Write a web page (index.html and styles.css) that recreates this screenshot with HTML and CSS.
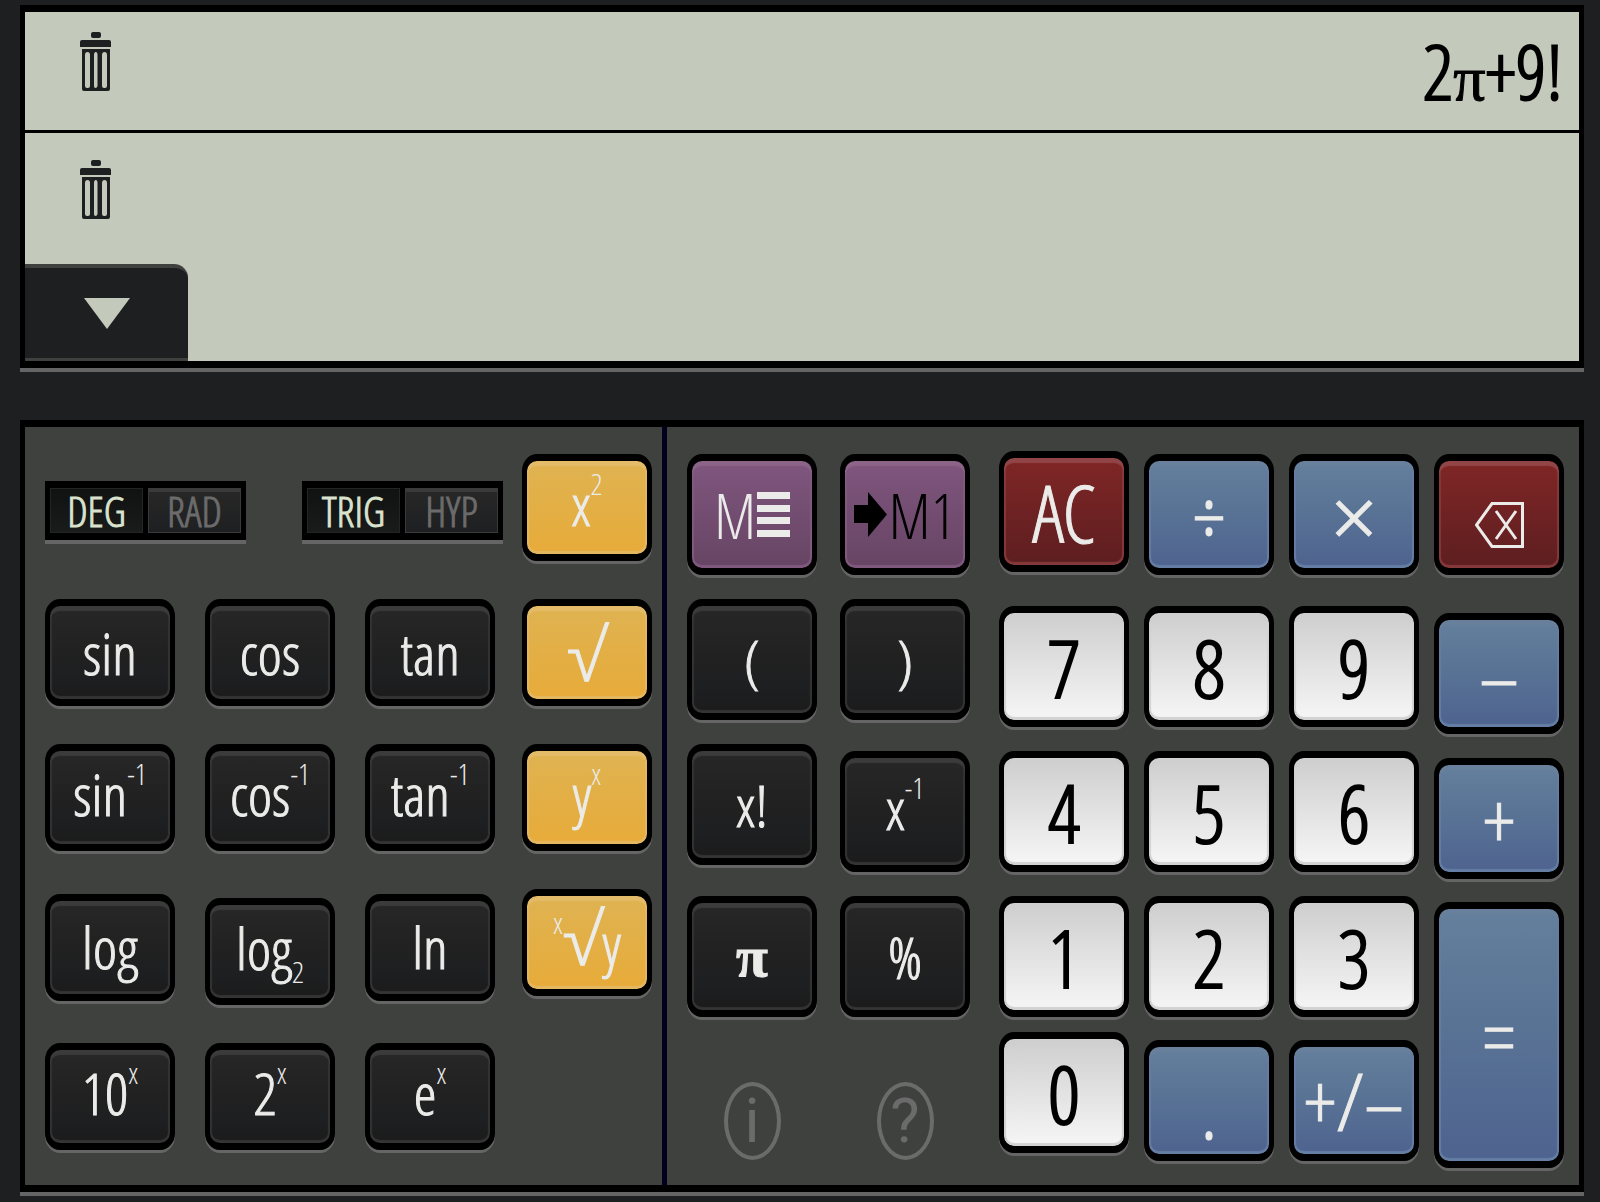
FILE: index.html
```html
<!DOCTYPE html>
<html lang="en">
<head>
<meta charset="utf-8">
<meta name="viewport" content="width=device-width, initial-scale=1">
<title>Scientific calculator</title>
<link rel="stylesheet" href="styles.css">
</head>
<body>
<svg class="defs" aria-hidden="true">
  <symbol id="trash" viewBox="0 0 31 60" preserveAspectRatio="none">
    <rect x="11" y="1" width="10" height="6" rx="2"/>
    <path d="M2 9h27q2 0 2 2v5H0v-5q0-2 2-2z"/>
    <path fill-rule="evenodd" d="M2 18h28v40q0 2-2 2H4q-2 0-2-2zM5 24v31q0 2 2 2h1q2 0 2-2V24q0-3-2.500-3T5 24zM14 24v31q0 2 1.500 2t2-2V24q0-3-1.700-3T14 24zM22 24v31q0 2 2 2h1q2 0 2-2V24q0-3-2.500-3T22 24z"/>
  </symbol>
</svg>
<main class="calculator">
  <section class="screen" aria-label="Display">
    <div class="line line--entry">
      <button class="trash" type="button" aria-label="Delete line 1"><svg><use href="#trash"/></svg></button>
      <output class="expression">2<span class="pi">π</span>+9!</output>
    </div>
    <div class="line line--empty">
      <button class="trash" type="button" aria-label="Delete line 2"><svg><use href="#trash"/></svg></button>
    </div>
    <button class="tab" type="button" aria-label="Collapse history"><svg viewBox="0 0 46 31"><path d="M0 0h46L23 31z"/></svg></button>
  </section>

  <section class="keypad" aria-label="Keypad">
    <div class="functions">
      <div class="toggles">
        <fieldset class="toggle" aria-label="Angle unit">
          <label class="option"><input type="radio" name="angle" checked><span>DEG</span></label>
          <label class="option"><input type="radio" name="angle"><span>RAD</span></label>
        </fieldset>
        <fieldset class="toggle" aria-label="Function family">
          <label class="option"><input type="radio" name="family" checked><span>TRIG</span></label>
          <label class="option"><input type="radio" name="family"><span>HYP</span></label>
        </fieldset>
      </div>
      <button class="key key--power key--script" type="button"><span>x<sup>2</sup></span></button>

      <button class="key" type="button">sin</button>
      <button class="key" type="button">cos</button>
      <button class="key" type="button">tan</button>
      <button class="key key--power" type="button"><span class="root">√</span></button>

      <button class="key key--script" type="button"><span>sin<sup>-1</sup></span></button>
      <button class="key key--script" type="button"><span>cos<sup>-1</sup></span></button>
      <button class="key key--script" type="button"><span>tan<sup>-1</sup></span></button>
      <button class="key key--power key--script" type="button"><span>y<sup>x</sup></span></button>

      <button class="key key--middle" type="button">log</button>
      <button class="key key--script key--end" type="button"><span>log<sub>2</sub></span></button>
      <button class="key key--middle" type="button">ln</button>
      <button class="key key--power" type="button"><span><sup>x</sup><span class="root">√</span>y</span></button>

      <button class="key key--script" type="button"><span>10<sup>x</sup></span></button>
      <button class="key key--script" type="button"><span>2<sup>x</sup></span></button>
      <button class="key key--script" type="button"><span>e<sup>x</sup></span></button>
    </div>

    <div class="main-keys">
      <div class="memory">
        <button class="key key--tall key--memory" type="button">M<svg class="bars" viewBox="0 0 33 45"><path d="M0 0h33v7H0zM0 13h33v7H0zM0 25h33v7H0zM0 38h33v7H0z"/></svg></button>
        <button class="key key--tall key--memory key--store" type="button"><svg class="arrow" viewBox="0 0 33 45"><path d="M0 13h14V0l19 22.500L14 45V31H0z"/></svg>M1</button>
        <button class="key key--tall" type="button">(</button>
        <button class="key key--tall" type="button">)</button>
        <button class="key key--tall" type="button">x!</button>
        <button class="key key--tall key--script key--end" type="button"><span>x<sup>-1</sup></span></button>
        <button class="key key--tall" type="button"><span class="pi">π</span></button>
        <button class="key key--tall" type="button">%</button>
        <button class="help" type="button">i</button>
        <button class="help" type="button">?</button>
      </div>

      <div class="numbers">
        <div class="number-row">
          <button class="key key--tall key--clear" type="button">AC</button>
          <button class="key key--tall key--operator key--end" type="button">÷</button>
          <button class="key key--tall key--operator key--times key--end" type="button">×</button>
          <button class="key key--tall key--clear key--end" type="button" aria-label="Backspace"><svg class="backspace" viewBox="0 0 49 46"><path d="M17 1.500h30.500v43H17L1.500 23z"/><path d="M21 9l20 28M41 9L21 37"/></svg></button>
        </div>
        <div class="number-grid">
          <button class="key key--tall key--digit" type="button">7</button>
          <button class="key key--tall key--digit" type="button">8</button>
          <button class="key key--tall key--digit" type="button">9</button>
          <button class="key key--tall key--operator key--end" type="button">–</button>
          <button class="key key--tall key--digit" type="button">4</button>
          <button class="key key--tall key--digit" type="button">5</button>
          <button class="key key--tall key--digit" type="button">6</button>
          <button class="key key--tall key--operator key--end" type="button">+</button>
          <button class="key key--tall key--digit" type="button">1</button>
          <button class="key key--tall key--digit" type="button">2</button>
          <button class="key key--tall key--digit" type="button">3</button>
          <button class="key key--equals key--operator key--end" type="button">=</button>
          <button class="key key--tall key--digit" type="button">0</button>
          <button class="key key--tall key--operator key--middle key--point" type="button">.</button>
          <button class="key key--tall key--operator key--middle" type="button">+/–</button>
        </div>
      </div>
    </div>
  </section>
</main>
</body>
</html>
```
FILE: styles.css
```css
* { box-sizing: border-box; }

body {
  margin: 0;
  background: #1e1f21;
  font-family: "Open Sans Condensed Light", "Open Sans Condensed", "Open Sans", "Noto Sans", sans-serif;
  font-weight: 300;
}

button {
  margin: 0;
  padding: 0;
  border: 0;
  background: none;
  font: inherit;
  color: inherit;
}

.defs { display: none; }

.calculator {
  display: flex;
  flex-direction: column;
  gap: 52px;
  padding: 5px 16px 10px 20px;
}

/* display */
.screen,
.keypad {
  border: solid #000;
  border-width: 7px 5px;
  box-shadow: 0 4px 0 #656565;
}

.screen {
  display: flex;
  flex-direction: column;
  background: #c3cabb;
}

.line {
  display: flex;
  justify-content: space-between;
  align-items: flex-start;
  padding-left: 55px;
  padding-right: 16px;
}

.line--entry {
  height: 121px;
  padding-top: 19px;
  border-bottom: 3px solid #000;
}

.line--empty {
  height: 131px;
  padding-top: 26px;
}

.trash { height: 60px; }
.trash svg { display: block; width: 31px; height: 60px; fill: #1e1f21; }

.expression {
  font-size: 76px;
  line-height: 80px;
  color: #000;
  -webkit-text-stroke: 2px #000;
}

.pi { font-family: "Liberation Serif", serif; font-weight: 700; }

.expression .pi {
  font-size: 64px;
  font-weight: 400;
  -webkit-text-stroke: 1px #000;
}

.tab {
  display: flex;
  align-items: center;
  justify-content: center;
  width: 163px;
  height: 97px;
  border: solid #3f413f;
  border-width: 4px 0 3px;
  border-radius: 0 14px 0 0;
  background: #1e1f21;
}

.tab svg { width: 46px; height: 31px; fill: #c3cabb; }

/* keypad */
.keypad {
  display: grid;
  grid-template-columns: 642fr 912fr;
  background: #3f413f;
}

.functions {
  display: grid;
  grid-template-columns: repeat(3, minmax(0, 130fr)) minmax(0, 127fr);
  grid-template-rows: 107px 107px 107px 116px 107px;
  gap: 38px 30px;
  align-items: start;
  padding: 27px 10px 35px 20px;
  border-right: 5px solid #00001e;
}

.toggles {
  display: flex;
  grid-column: span 3;
  align-self: center;
  justify-content: space-between;
  margin-right: -8px;
  padding-top: 6px;
}

.toggle {
  display: flex;
  gap: 5px;
  width: 201px;
  min-width: 0;
  height: 59px;
  margin: 0;
  padding: 0;
  border: solid #000;
  border-width: 7px 5px;
  background: #000;
  box-shadow: 0 4px 0 #656565;
}

.option { position: relative; flex: 1; }

.option input {
  position: absolute;
  inset: 0;
  width: 100%;
  height: 100%;
  margin: 0;
  opacity: 0;
}

.option span {
  display: flex;
  align-items: center;
  justify-content: center;
  height: 45px;
  background: linear-gradient(#282828, #1e1f21);
  box-shadow: inset 0 4px 0 #3a3a3a, inset 0 0 0 1px #3a3a3a;
  font-size: 42px;
  line-height: 45px;
  color: #6b6b6b;
  -webkit-text-stroke: 1px currentColor;
}

.option input:checked + span {
  background: linear-gradient(#101111, #1a1b1b);
  box-shadow: inset 0 0 0 1px #242424;
  color: #d9e2cd;
}

.key {
  --edge: #343434;
  --shine: #3b3b3b;
  display: flex;
  align-items: center;
  justify-content: center;
  width: 100%;
  height: 107px;
  border: solid #000;
  border-width: 7px 5px;
  border-radius: 15px / 17px;
  background: linear-gradient(#272727, #212121 50%, #1e1f21 75%, #1b1b1b) padding-box;
  box-shadow: 0 3px 0 #656565, inset 0 5px 1px var(--shine), inset 0 -2px 1px 1px var(--edge), inset 0 0 1px 2px var(--edge);
  font-size: 58px;
  line-height: 1;
  white-space: nowrap;
  color: #ebebe9;
  -webkit-text-stroke: 1px currentColor;
}

.key--tall { height: 121px; }
.key--middle { align-self: center; }
.key--end { align-self: end; }
.key--script { padding-bottom: 8px; }

.key sup,
.key sub {
  font-size: 30px;
  line-height: 0;
  -webkit-text-stroke: 0;
}

.key sup { vertical-align: 31px; }
.key sub { vertical-align: -13px; }

.root { font-size: 72px; line-height: 0; }

.key--power {
  --edge: #e4b761;
  --shine: #e3bb69;
  width: calc(100% + 3px);
  margin-left: -3px;
  background: linear-gradient(#dfb352, #e7ab39) padding-box;
}

.key--memory {
  --edge: #81597f;
  --shine: #8c6488;
  gap: 1px;
  background: linear-gradient(#80567f, #664463) padding-box;
  font-size: 62px;
  -webkit-text-stroke: 0;
}

.key--store { color: #000; }

.key--clear {
  --edge: #85393b;
  --shine: #924546;
  background: linear-gradient(#802626, #5d1e20) padding-box;
}

.key--operator {
  --edge: #657ea4;
  --shine: #68809c;
  background: linear-gradient(#65809d, #5b7696 35%, #4e638f) padding-box;
}

.key--digit {
  --edge: #d2d2d2;
  --shine: #cfcfcf;
  background: linear-gradient(#cecece, #f6f6f6) padding-box;
  color: #000;
  -webkit-text-stroke: 2px #000;
}

.key--digit,
.key--clear,
.key--operator { font-size: 80px; }

.key--times { font-size: 104px; }
.key--equals { grid-row: span 2; height: 266px; }
.key--point { padding-top: 16px; }

.bars,
.arrow { width: 33px; height: 45px; fill: currentColor; }
.backspace { width: 49px; height: 46px; margin-top: 20px; fill: none; stroke: currentColor; stroke-width: 3; }

.main-keys {
  display: grid;
  grid-template-columns: 283fr 565fr;
  gap: 29px;
  padding: 24px 15px 17px 20px;
}

.memory {
  display: grid;
  grid-template-columns: repeat(2, minmax(0, 1fr));
  grid-template-rows: 121px 121px 128px 121px 121px;
  gap: 24px 23px;
  align-items: start;
  padding-top: 3px;
}

.help {
  align-self: end;
  justify-self: center;
  width: 57px;
  height: 78px;
  margin-bottom: 2px;
  border: 4px solid #6b6b6b;
  border-radius: 50%;
  font-family: Roboto, sans-serif;
  font-size: 62px;
  font-weight: 400;
  line-height: 70px;
  color: #6b6b6b;
}

.numbers {
  display: flex;
  flex-direction: column;
  gap: 31px;
}

.number-row,
.number-grid {
  display: grid;
  grid-template-columns: repeat(4, minmax(0, 1fr));
  gap: 17px 15px;
  align-items: start;
}

.number-row { height: 124px; grid-template-rows: 124px; }
.number-grid { grid-template-rows: 128px 128px 119px 136px; }
```
